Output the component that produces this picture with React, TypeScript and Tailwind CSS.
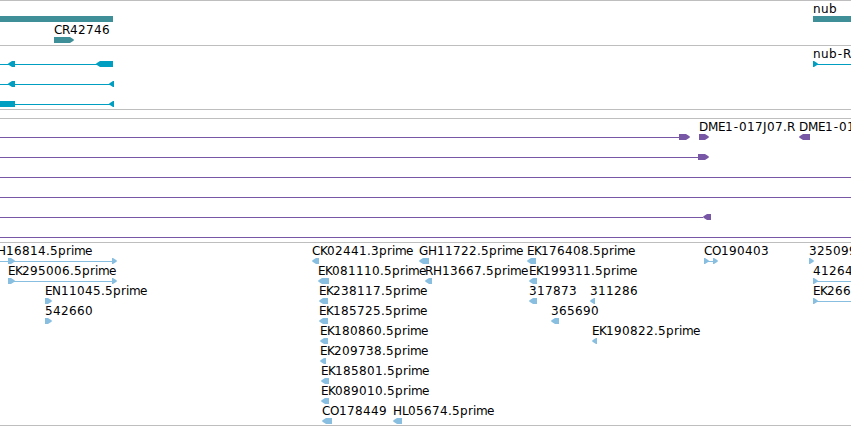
type Dir = "left" | "right";

interface Label {
    x: number;
    y: number;
    text: string;
}

interface Line {
    x1: number;
    x2: number;
    y: number;
}

// exon block, drawn 6px high, with an optional arrow head on one side
interface Block {
    x1: number;
    x2: number;
    y: number;
    dir?: Dir;
}

interface Track {
    name: string;
    color: string;
    size: string;
    labels: Label[];
    lines: Line[];
    blocks: Block[];
}

// label glyphs sit on whole pixels
const ADVANCE: Record<string, number> = {
    C: 8, D: 9, E: 7, G: 9, H: 9, J: 4, K: 7, L: 6, M: 10, N: 9, O: 9, R: 8,
    b: 8, e: 8, i: 3, m: 11, n: 8, p: 8, r: 5, u: 8, ".": 4, "-": 6,
};

const tracks: Track[] = [
    {
        name: "Genes",
        color: "#3f8f98",
        size: "h-[45px]",
        labels: [
            { x: 813, y: 13, text: "nub" },
            { x: 54, y: 34, text: "CR42746" },
        ],
        lines: [],
        blocks: [
            { x1: 0, x2: 113, y: 16 },
            { x1: 813, x2: 851, y: 16 },
            { x1: 54, x2: 75, y: 37, dir: "right" },
        ],
    },
    {
        name: "Transcripts",
        color: "#009fc2",
        size: "h-16",
        labels: [{ x: 813, y: 13, text: "nub-R" }],
        lines: [
            { x1: 0, x2: 113, y: 19 },
            { x1: 0, x2: 113, y: 39 },
            { x1: 0, x2: 113, y: 59 },
            { x1: 813, x2: 851, y: 19 },
        ],
        blocks: [
            { x1: 7, x2: 15, y: 16, dir: "left" },
            { x1: 95, x2: 113, y: 16, dir: "left" },
            { x1: 7, x2: 15, y: 36, dir: "left" },
            { x1: 108, x2: 114, y: 36, dir: "left" },
            { x1: 0, x2: 15, y: 56 },
            { x1: 108, x2: 114, y: 56, dir: "left" },
            { x1: 813, x2: 819, y: 16, dir: "right" },
        ],
    },
    { name: "Spacer", color: "#7858a6", size: "h-[9px]", labels: [], lines: [], blocks: [] },
    {
        name: "BAC ends",
        color: "#7858a6",
        size: "h-[124px]",
        labels: [
            { x: 699, y: 13, text: "DME1-017J07.R" },
            { x: 799, y: 13, text: "DME1-017" },
        ],
        lines: [
            { x1: 0, x2: 680, y: 19 },
            { x1: 0, x2: 699, y: 39 },
            { x1: 0, x2: 851, y: 59 },
            { x1: 0, x2: 851, y: 79 },
            { x1: 0, x2: 703, y: 99 },
            { x1: 0, x2: 851, y: 119 },
        ],
        blocks: [
            { x1: 679, x2: 691, y: 16, dir: "right" },
            { x1: 699, x2: 710, y: 16, dir: "right" },
            { x1: 798, x2: 810, y: 16, dir: "left" },
            { x1: 698, x2: 710, y: 36, dir: "right" },
            { x1: 702, x2: 711, y: 96, dir: "left" },
        ],
    },
    {
        name: "ESTs",
        color: "#88bee0",
        size: "h-[183px]",
        labels: [
            { x: -12, y: 13, text: "GH16814.5prime" },
            { x: 8, y: 33, text: "EK295006.5prime" },
            { x: 45, y: 53, text: "EN11045.5prime" },
            { x: 45, y: 73, text: "542660" },
            { x: 312, y: 13, text: "CK02441.3prime" },
            { x: 318, y: 33, text: "EK081110.5prime" },
            { x: 319, y: 53, text: "EK238117.5prime" },
            { x: 319, y: 73, text: "EK185725.5prime" },
            { x: 320, y: 93, text: "EK180860.5prime" },
            { x: 320, y: 113, text: "EK209738.5prime" },
            { x: 321, y: 133, text: "EK185801.5prime" },
            { x: 321, y: 153, text: "EK089010.5prime" },
            { x: 322, y: 173, text: "CO178449" },
            { x: 393, y: 173, text: "HL05674.5prime" },
            { x: 419, y: 13, text: "GH11722.5prime" },
            { x: 425, y: 33, text: "RH13667.5prime" },
            { x: 527, y: 13, text: "EK176408.5prime" },
            { x: 529, y: 33, text: "EK199311.5prime" },
            { x: 529, y: 53, text: "317873" },
            { x: 590, y: 53, text: "311286" },
            { x: 551, y: 73, text: "365690" },
            { x: 592, y: 93, text: "EK190822.5prime" },
            { x: 704, y: 13, text: "CO190403" },
            { x: 809, y: 13, text: "325099" },
            { x: 813, y: 33, text: "412640" },
            { x: 813, y: 53, text: "EK2660" },
        ],
        lines: [
            { x1: 0, x2: 113, y: 19 },
            { x1: 8, x2: 113, y: 39 },
            { x1: 704, x2: 714, y: 19 },
            { x1: 813, x2: 851, y: 39 },
            { x1: 813, x2: 851, y: 59 },
        ],
        blocks: [
            { x1: 8, x2: 16, y: 16, dir: "right" },
            { x1: 112, x2: 118, y: 16, dir: "right" },
            { x1: 8, x2: 16, y: 36, dir: "right" },
            { x1: 112, x2: 118, y: 36, dir: "right" },
            { x1: 45, x2: 53, y: 56, dir: "right" },
            { x1: 45, x2: 53, y: 76, dir: "right" },
            { x1: 311, x2: 319, y: 16, dir: "left" },
            { x1: 317, x2: 329, y: 36, dir: "left" },
            { x1: 318, x2: 328, y: 56, dir: "left" },
            { x1: 318, x2: 328, y: 76, dir: "left" },
            { x1: 319, x2: 328, y: 96, dir: "left" },
            { x1: 319, x2: 326, y: 116, dir: "left" },
            { x1: 320, x2: 329, y: 136, dir: "left" },
            { x1: 320, x2: 329, y: 156, dir: "left" },
            { x1: 321, x2: 332, y: 176, dir: "left" },
            { x1: 392, x2: 402, y: 176, dir: "left" },
            { x1: 418, x2: 429, y: 16, dir: "left" },
            { x1: 424, x2: 432, y: 36, dir: "left" },
            { x1: 526, x2: 536, y: 16, dir: "left" },
            { x1: 528, x2: 537, y: 36, dir: "left" },
            { x1: 528, x2: 537, y: 56, dir: "left" },
            { x1: 589, x2: 595, y: 56, dir: "left" },
            { x1: 550, x2: 559, y: 76, dir: "left" },
            { x1: 591, x2: 597, y: 96, dir: "left" },
            { x1: 704, x2: 710, y: 16, dir: "right" },
            { x1: 713, x2: 719, y: 16, dir: "right" },
            { x1: 809, x2: 815, y: 16, dir: "right" },
            { x1: 813, x2: 819, y: 36, dir: "right" },
            { x1: 813, x2: 819, y: 56, dir: "right" },
        ],
    },
];

function glyphPositions({ x, text }: Label) {
    let pos = x;
    return text.split("").map((ch) => {
        // the hyphen is narrower than its cell, so centre it
        const at = ch === "-" ? pos + 0.8 : pos;
        pos += ADVANCE[ch] ?? 8;
        return at;
    });
}

function blockPoints({ x1, x2, y, dir }: Block) {
    const head = Math.min(5, x2 - x1 - 1);
    if (dir === "left") {
        const tip = x1 + 0.9;
        return `${x2},${y} ${x1 + head},${y} ${tip + 1},${y + 2} ${tip},${y + 3} ${tip + 1},${y + 4} ${x1 + head},${y + 6} ${x2},${y + 6}`;
    }
    if (dir === "right") {
        const tip = x2 - 0.9;
        return `${x1},${y} ${x2 - head},${y} ${tip - 1},${y + 2} ${tip},${y + 3} ${tip - 1},${y + 4} ${x2 - head},${y + 6} ${x1},${y + 6}`;
    }
    return `${x1},${y} ${x2},${y} ${x2},${y + 6} ${x1},${y + 6}`;
}

function TrackRow({ track }: { track: Track }) {
    return (
        <section aria-label={track.name} className={`${track.size} border-t border-[#bebebe]`}>
            {/* -mt-px lines the drawing up with the top of the border */}
            <svg width={851} height="100%" className="block -mt-px overflow-visible">
                {track.lines.map((line, i) => (
                    <rect key={i} x={line.x1} y={line.y} width={line.x2 - line.x1} height={1} fill={track.color} />
                ))}
                {track.blocks.map((block, i) => (
                    <polygon key={i} points={blockPoints(block)} fill={track.color} />
                ))}
                {track.labels.map((label) => (
                    <text
                        key={label.text + label.x}
                        x={glyphPositions(label).join(" ")}
                        y={label.y}
                        className="fill-black text-[12px] font-['DejaVu_Sans',sans-serif]"
                    >
                        {label.text}
                    </text>
                ))}
            </svg>
        </section>
    );
}

export default function App() {
    return (
        <main className="w-[851px] h-[426px] overflow-hidden bg-white border-b border-[#bebebe]">
            {tracks.map((track) => (
                <TrackRow key={track.name} track={track} />
            ))}
        </main>
    );
}
